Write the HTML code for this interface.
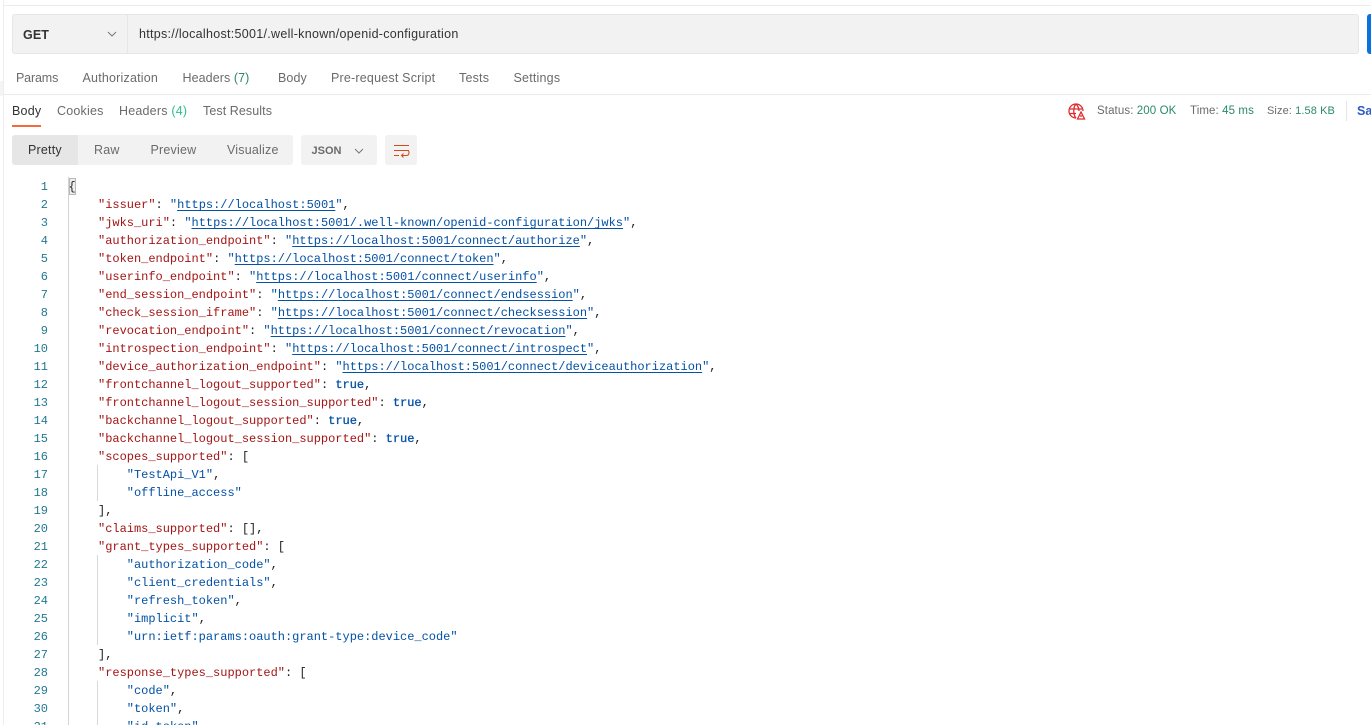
<!DOCTYPE html>
<html><head><meta charset="utf-8">
<style>
html,body{margin:0;padding:0;background:#fff;overflow:hidden;width:1371px;height:725px}
body{position:relative;font-family:"Liberation Sans",sans-serif;font-size:12.5px;color:#6b6b6b}
.a{position:absolute;white-space:nowrap}
.box{position:absolute;background:#f2f2f2;border-radius:3px}
.code{position:absolute;left:98px;top:178px;font:12px/18px "Liberation Mono",monospace;color:#212121;white-space:pre;letter-spacing:-.01px}
.nums{position:absolute;left:0;width:48px;top:178px;font:12px/18px "Liberation Mono",monospace;color:#237893;text-align:right;white-space:pre}
i{font-style:normal;color:#a31515}
b{font-weight:normal;color:#0451a5}
u{color:#0451a5;text-decoration:underline;text-underline-offset:2px}
s{text-decoration:none;color:#0451a5;-webkit-text-stroke:.3px #0451a5}
.g{color:#2a8a68}
</style></head><body>
<div class="a" style="left:3px;top:5px;width:1368px;height:1px;background:#ececec"></div>
<div class="a" style="left:3px;top:0;width:1px;height:725px;background:#ededed"></div>
<div class="a" style="left:0;top:81px;width:3px;height:15px;background:#f4f4f4"></div>

<div class="box" style="left:12px;top:14px;width:1345px;height:38px;border:1px solid #e6e6e6"></div>
<div class="a" style="left:127px;top:14px;width:1px;height:40px;background:#e6e6e6"></div>
<div class="a" style="left:23px;top:28px;font-size:12.5px;font-weight:bold;color:#333;letter-spacing:.1px">GET</div>
<svg class="a" style="left:107px;top:31px" width="10" height="7" viewBox="0 0 10 7"><path d="M1 1l4 4 4-4" fill="none" stroke="#777" stroke-width="1"/></svg>
<div class="a" style="left:139px;top:27px;font-size:12.5px;color:#333;letter-spacing:.29px">https://localhost:5001/.well-known/openid-configuration</div>
<div class="a" style="left:1367px;top:14px;width:4px;height:40px;background:#0a72e0;border-radius:3px 0 0 3px"></div>

<div class="a" style="left:16px;top:71px;letter-spacing:-.15px">Params</div>
<div class="a" style="left:82.500px;top:71px;letter-spacing:.2px">Authorization</div>
<div class="a" style="left:182.500px;top:71px;letter-spacing:.08px">Headers <span style="color:#2a8a68">(7)</span></div>
<div class="a" style="left:278px;top:71px;letter-spacing:.1px">Body</div>
<div class="a" style="left:331px;top:71px;letter-spacing:.2px">Pre-request Script</div>
<div class="a" style="left:459px;top:71px;letter-spacing:.2px">Tests</div>
<div class="a" style="left:513.500px;top:71px;letter-spacing:.2px">Settings</div>
<div class="a" style="left:3px;top:94px;width:1368px;height:1px;background:#ececec"></div>

<div class="a" style="left:12px;top:104px;color:#333;letter-spacing:.2px">Body</div>
<div class="a" style="left:12px;top:125px;width:29px;height:2px;background:#f26b3a"></div>
<div class="a" style="left:57px;top:104px;letter-spacing:.2px">Cookies</div>
<div class="a" style="left:119px;top:104px;letter-spacing:.2px">Headers <span style="color:#2cc08a">(4)</span></div>
<div class="a" style="left:203px;top:104px;letter-spacing:.08px">Test Results</div>

<svg class="a" style="left:1068px;top:103px" width="18" height="17" viewBox="0 0 18 17" fill="none" stroke="#e02b2b" stroke-width="1.300"><path d="M8 15A7 7 0 1 1 15 8M1 6h13M1 10.500h7M8 1C5 4 5 12 8 15M8 1c2.500 2.500 3 5 3 7"/><path d="M13 9l-3.500 7h7z" fill="#fff"/><path d="M13 12v2"/></svg>
<div class="a" style="left:1097px;top:104.500px;font-size:11.500px;letter-spacing:.1px">Status: <span class="g">200 OK</span></div>
<div class="a" style="left:1190px;top:104.500px;font-size:11.500px;letter-spacing:.1px">Time: <span class="g">45 ms</span></div>
<div class="a" style="left:1267px;top:104.500px;font-size:11px;letter-spacing:.1px">Size: <span class="g">1.58 KB</span></div>
<div class="a" style="left:1346px;top:101px;width:1px;height:20px;background:#e6e6e6"></div>
<div class="a" style="left:1357px;top:104px;font-weight:bold;color:#2a5bc4;font-size:12.500px">Sa</div>

<div class="box" style="left:12px;top:135px;width:281px;height:30px"></div>
<div class="box" style="left:12px;top:135px;width:66px;height:30px;background:#e6e6e6;border-radius:3px 0 0 3px"></div>
<div class="a" style="left:28px;top:143px;color:#333;letter-spacing:.2px">Pretty</div>
<div class="a" style="left:94px;top:143px;letter-spacing:.2px">Raw</div>
<div class="a" style="left:150.500px;top:143px;letter-spacing:.2px">Preview</div>
<div class="a" style="left:227px;top:143px;letter-spacing:.2px">Visualize</div>
<div class="box" style="left:301px;top:135px;width:76px;height:30px"></div>
<div class="a" style="left:311.500px;top:145px;font-size:11px;font-weight:bold;color:#6b6b6b">JSON</div>
<svg class="a" style="left:354px;top:148px" width="10" height="7" viewBox="0 0 10 7"><path d="M1 1l4 4 4-4" fill="none" stroke="#777" stroke-width="1"/></svg>
<div class="box" style="left:385px;top:135px;width:32px;height:30px"></div>
<svg class="a" style="left:393px;top:144px" width="18" height="15" viewBox="0 0 18 15" fill="none" stroke="#d9481c" stroke-width="1"><path d="M1 1.500h15M1 6.500h15M1 11.500h5M15 6.500c1.500 1 1.500 5-1.500 5H8.500M10.500 9.500l-2 2 2 2"/></svg>

<div class="a" style="left:68px;top:177px;width:1px;height:548px;background:#d4d4d4"></div>
<div class="a" style="left:69px;top:178px;width:5px;height:15px;border:1px solid #b9b9b9;background:#eee"></div>
<div class="a" style="left:97px;top:465px;width:1px;height:36px;background:#d9d9d9"></div>
<div class="a" style="left:97px;top:555px;width:1px;height:90px;background:#d9d9d9"></div>
<div class="a" style="left:97px;top:681px;width:1px;height:44px;background:#d9d9d9"></div>

<div class="nums">1
2
3
4
5
6
7
8
9
10
11
12
13
14
15
16
17
18
19
20
21
22
23
24
25
26
27
28
29
30
31</div>
<div class="a" style="left:68.500px;top:178px;font:12px/18px 'Liberation Mono',monospace;color:#222">{</div>
<div class="code"><br><i>"issuer"</i>: <b>"</b><u>https://localhost:5001</u><b>"</b>,
<i>"jwks_uri"</i>: <b>"</b><u>https://localhost:5001/.well-known/openid-configuration/jwks</u><b>"</b>,
<i>"authorization_endpoint"</i>: <b>"</b><u>https://localhost:5001/connect/authorize</u><b>"</b>,
<i>"token_endpoint"</i>: <b>"</b><u>https://localhost:5001/connect/token</u><b>"</b>,
<i>"userinfo_endpoint"</i>: <b>"</b><u>https://localhost:5001/connect/userinfo</u><b>"</b>,
<i>"end_session_endpoint"</i>: <b>"</b><u>https://localhost:5001/connect/endsession</u><b>"</b>,
<i>"check_session_iframe"</i>: <b>"</b><u>https://localhost:5001/connect/checksession</u><b>"</b>,
<i>"revocation_endpoint"</i>: <b>"</b><u>https://localhost:5001/connect/revocation</u><b>"</b>,
<i>"introspection_endpoint"</i>: <b>"</b><u>https://localhost:5001/connect/introspect</u><b>"</b>,
<i>"device_authorization_endpoint"</i>: <b>"</b><u>https://localhost:5001/connect/deviceauthorization</u><b>"</b>,
<i>"frontchannel_logout_supported"</i>: <s>true</s>,
<i>"frontchannel_logout_session_supported"</i>: <s>true</s>,
<i>"backchannel_logout_supported"</i>: <s>true</s>,
<i>"backchannel_logout_session_supported"</i>: <s>true</s>,
<i>"scopes_supported"</i>: [
    <b>"TestApi_V1"</b>,
    <b>"offline_access"</b>
],
<i>"claims_supported"</i>: [],
<i>"grant_types_supported"</i>: [
    <b>"authorization_code"</b>,
    <b>"client_credentials"</b>,
    <b>"refresh_token"</b>,
    <b>"implicit"</b>,
    <b>"urn:ietf:params:oauth:grant-type:device_code"</b>
],
<i>"response_types_supported"</i>: [
    <b>"code"</b>,
    <b>"token"</b>,
    <b>"id_token"</b>
</div>
</body></html>
